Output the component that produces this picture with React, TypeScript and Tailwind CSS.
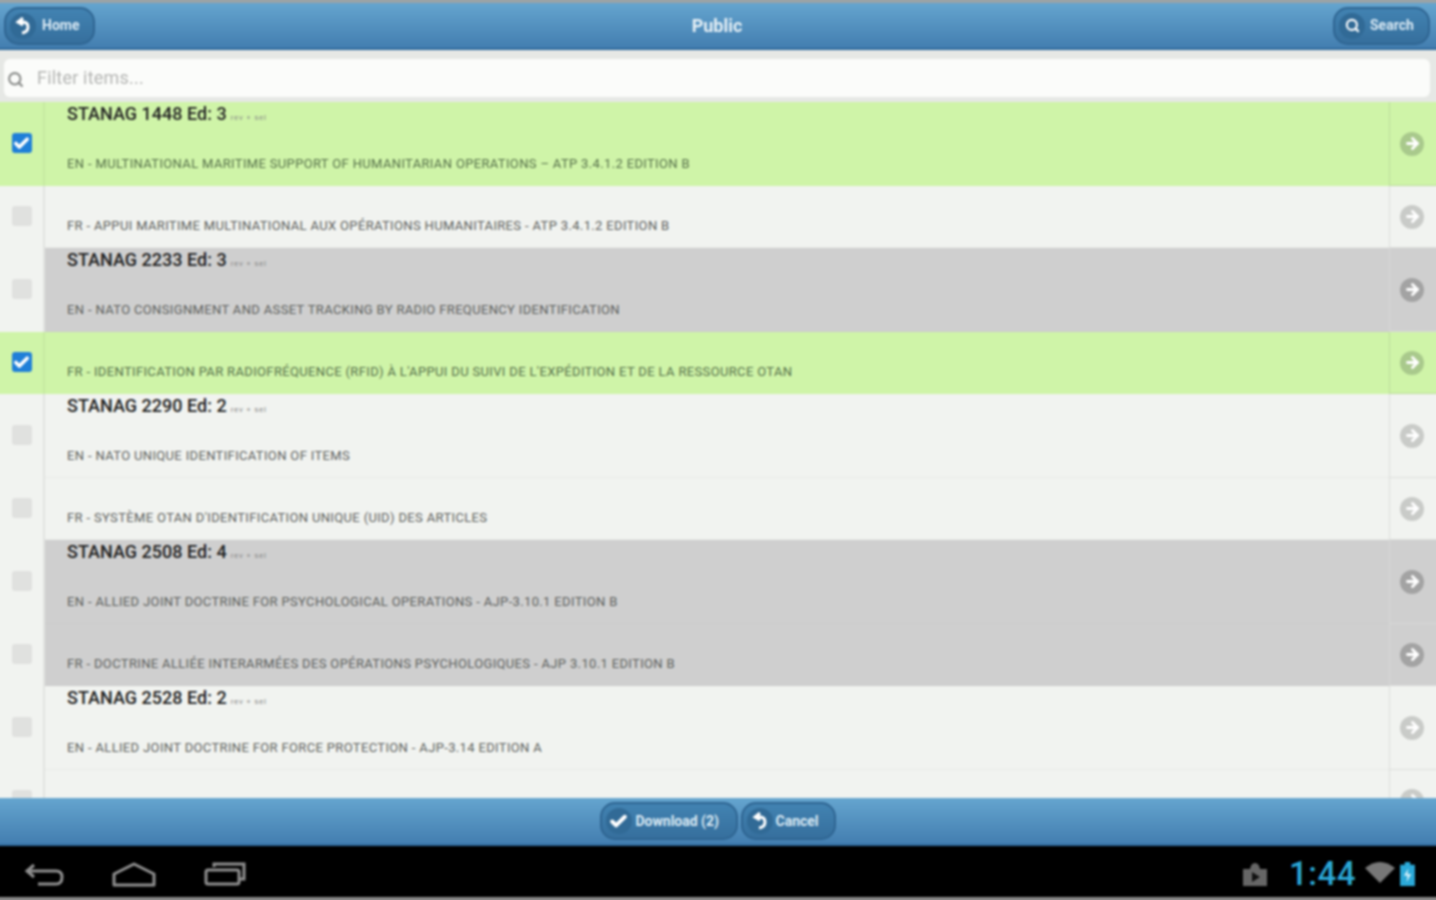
import { Check, Search, ArrowRight } from "lucide-react";

interface RowData {
  title?: string;
  text: string;
  tone: "green" | "plain" | "gray";
  checked?: boolean;
}

const rows: RowData[] = [
  { title: "STANAG 1448 Ed: 3", text: "EN - MULTINATIONAL MARITIME SUPPORT OF HUMANITARIAN OPERATIONS – ATP 3.4.1.2 EDITION B", tone: "green", checked: true },
  { text: "FR - APPUI MARITIME MULTINATIONAL AUX OPÉRATIONS HUMANITAIRES - ATP 3.4.1.2 EDITION B", tone: "plain" },
  { title: "STANAG 2233 Ed: 3", text: "EN - NATO CONSIGNMENT AND ASSET TRACKING BY RADIO FREQUENCY IDENTIFICATION", tone: "gray" },
  { text: "FR - IDENTIFICATION PAR RADIOFRÉQUENCE (RFID) À L'APPUI DU SUIVI DE L'EXPÉDITION ET DE LA RESSOURCE OTAN", tone: "green", checked: true },
  { title: "STANAG 2290 Ed: 2", text: "EN - NATO UNIQUE IDENTIFICATION OF ITEMS", tone: "plain" },
  { text: "FR - SYSTÈME OTAN D'IDENTIFICATION UNIQUE (UID) DES ARTICLES", tone: "plain" },
  { title: "STANAG 2508 Ed: 4", text: "EN - ALLIED JOINT DOCTRINE FOR PSYCHOLOGICAL OPERATIONS - AJP-3.10.1 EDITION B", tone: "gray" },
  { text: "FR - DOCTRINE ALLIÉE INTERARMÉES DES OPÉRATIONS PSYCHOLOGIQUES - AJP 3.10.1 EDITION B", tone: "gray" },
  { title: "STANAG 2528 Ed: 2", text: "EN - ALLIED JOINT DOCTRINE FOR FORCE PROTECTION - AJP-3.14 EDITION A", tone: "plain" },
  { text: "", tone: "plain" },
];

function Row({ row }: { row: RowData }) {
  const bg =
    row.tone === "green" ? "bg-[#cff4a8]" : row.tone === "gray" ? "bg-[#cfcfcf]" : "bg-[#f1f3f0]";
  const arrow =
    row.tone === "green" ? "bg-[#a9c98c]" : row.tone === "gray" ? "bg-[#a3a3a3]" : "bg-[#c9cbc8]";
  const leftBg = row.tone === "green" ? "bg-[#cff4a8]" : "bg-[#f1f3f0]";
  const line =
    row.tone === "green" ? "border-[#cff4a8]" : row.tone === "gray" ? "border-[#cbcbcb]" : "border-[#e8eae7]";
  return (
    <div className={`flex shrink-0 ${row.title ? "h-[84px]" : "h-[62px]"} ${bg}`}>
      {/* the outer 4px sit outside the visible page so the blur keeps clean edges */}
      <div className={`w-[49px] shrink-0 flex items-center justify-center pl-[4px] border-r-2 ${leftBg} ${row.tone === "green" ? "border-[#c6eaa2]" : "border-[#e2e4e1]"}`}>
        {row.checked ? (
          <div className="w-5 h-5 rounded-[3px] bg-[#1f7fd8] flex items-center justify-center -mt-[2px]">
            <Check size={17} strokeWidth={5} className="text-white" />
          </div>
        ) : (
          <div className="w-5 h-5 rounded-[3px] bg-[#e0e1df] -mt-[2px]" />
        )}
      </div>
      <div className={`flex-1 min-w-0 pl-[22px] pb-[12px] flex flex-col border-b ${line}`}>
        {row.title && (
          <div className="flex items-baseline gap-[4px] h-[24px] text-[#222]">
            <span className="text-[18px] leading-[24px] font-medium tracking-[0.02px]">{row.title}</span>
            <span className="text-[8px] tracking-[0.7px] text-[#888]">rev + sel</span>
          </div>
        )}
        <div className={`mt-auto text-[13px] leading-[18px] whitespace-nowrap tracking-[0.35px] ${row.tone === "green" ? "text-[#56704a]" : "text-[#5d5f5d]"}`}>
          {row.text}
        </div>
      </div>
      <div className={`w-[51px] shrink-0 flex items-center justify-center pr-[6px] border-l border-b ${row.tone === "green" ? "border-[#bddc9d]" : row.tone === "gray" ? "border-[#d8d9d7]" : "border-[#dcdedb]"}`}>
        <div className={`w-6 h-6 rounded-full flex items-center justify-center ${arrow}`}>
          <ArrowRight size={17} strokeWidth={4} className="text-white" />
        </div>
      </div>
    </div>
  );
}

function HookArrow() {
  return (
    <svg width="18" height="18" viewBox="0 0 18 18" fill="none" stroke="currentColor" strokeWidth="3">
      <path d="M9 1 L4 5 L9 8 M4 5 H9 Q14 5 14 10 Q14 15 8 16" />
    </svg>
  );
}

function BarButton({ icon, label, className }: { icon: React.ReactNode; label: string; className: string }) {
  return (
    <div className={`h-[38px] rounded-[15px] border-2 border-[#2f6592] bg-gradient-to-b from-[#4283b2] to-[#366f9d] flex items-center text-[14px] font-bold text-[#dcebf5] ${className}`}>
      <div className="w-[26px] h-[26px] ml-[4px] rounded-full bg-[#316a96] flex items-center justify-center text-white">
        {icon}
      </div>
      <span className="whitespace-nowrap">{label}</span>
    </div>
  );
}

function NavIcons() {
  return (
    <div className="flex items-center pl-[28px] gap-[48px] mt-[4px]">
      <svg width="40" height="26" viewBox="0 0 40 26" fill="none" stroke="#8f8f8f" strokeWidth="3">
        <path d="M10 4 L3 10 L10 16 M3 10 H32 Q38 10 38 16 Q38 23 32 23 H14" />
      </svg>
      <svg width="44" height="26" viewBox="0 0 44 26" fill="none" stroke="#8f8f8f" strokeWidth="3">
        <path d="M2 13 L22 3 L42 13 V24 H2 Z" strokeLinejoin="round" />
      </svg>
      <svg width="42" height="26" viewBox="0 0 42 26" fill="none" stroke="#8f8f8f" strokeWidth="3">
        <path d="M10 6 V3 H40 V18 H36" />
        <rect x="2" y="9" width="33" height="14" rx="2" />
      </svg>
    </div>
  );
}

function StatusIcons() {
  return (
    <div className="flex items-center pr-[25px] mt-[4px]">
      <svg width="26" height="26" viewBox="0 0 26 26" className="mr-[21px]">
        <path d="M1 8 H8 Q9 2 13 2 Q17 2 18 8 H25 V25 H1 Z" fill="#666" />
        <path d="M10 11 L18 16 L10 21 Z" fill="#111" />
      </svg>
      <span className="text-[33px] leading-none font-medium text-[#2ba9d8] tracking-[0.5px] mr-[9px]">1:44</span>
      <svg width="30" height="22" viewBox="0 0 30 22" className="mr-[5px] -mt-[3px]">
        <path d="M0 7 Q15 -5 30 7 L15 22 Z" fill="#777" />
      </svg>
      <svg width="15" height="24" viewBox="0 0 16 26">
        <path d="M5 0 H11 V3 H16 V26 H0 V3 H5 Z" fill="#2ba9d8" />
        <path d="M9 7 L4 15 H8 L7 22 L12 13 H8 Z" fill="#d5f0fa" />
      </svg>
    </div>
  );
}

export default function App() {
  return (
    <div className="w-[1436px] h-[900px] overflow-hidden bg-[#f1f3f0]">
      <div className="w-[1444px] h-[908px] -m-[4px] overflow-hidden flex flex-col font-['Roboto',sans-serif] blur-[0.8px]">
        <div className="h-[7px] shrink-0 bg-[#9aa3a6]" />
        <header className="h-[47px] shrink-0 flex items-center justify-between pl-[8px] pr-[10px] bg-gradient-to-b from-[#65a5cf] to-[#437eb0] border-b-2 border-[#2f6a9c] relative">
          <BarButton icon={<HookArrow />} label="Home" className="w-[91px] gap-[6px]" />
          <h1 className="absolute left-0 right-0 text-center text-[18px] font-bold text-[#e6f0f6] -ml-[2px]">Public</h1>
          <BarButton icon={<Search size={15} strokeWidth={3.4} />} label="Search" className="w-[97px] gap-[5px]" />
        </header>
        <div className="h-[52px] shrink-0 bg-[#e6e8e5] pl-[8px] pr-[10px] pt-[9px] pb-[5px]">
          <div className="h-[38px] rounded-[6px] bg-[#fbfcfa] flex items-center pl-[3px] gap-[13px]">
            <Search size={17} strokeWidth={3} className="text-[#8b8d8b] mt-[2px]" />
            <span className="text-[18px] tracking-[0.2px] text-[#b4b5b3] -mt-[1px]">Filter items...</span>
          </div>
        </div>
        <main className="flex-1 min-h-0 overflow-hidden flex flex-col">
          {rows.map((row, i) => (
            <Row key={i} row={row} />
          ))}
        </main>
        <footer className="h-[48px] shrink-0 flex items-center justify-center gap-[3px] pr-[1px] bg-gradient-to-b from-[#65a5cf] to-[#437eb0] border-b-2 border-[#2f6a9c]">
          <BarButton icon={<Check size={19} strokeWidth={5} />} label="Download (2)" className="w-[138px] gap-[4px]" />
          <BarButton icon={<HookArrow />} label="Cancel" className="w-[95px] gap-[3px]" />
        </footer>
        <div className="h-[51px] shrink-0 flex items-center justify-between bg-black">
          <NavIcons />
          <StatusIcons />
        </div>
        <div className="h-[7px] shrink-0 bg-[#8a8a8a]" />
      </div>
    </div>
  );
}
